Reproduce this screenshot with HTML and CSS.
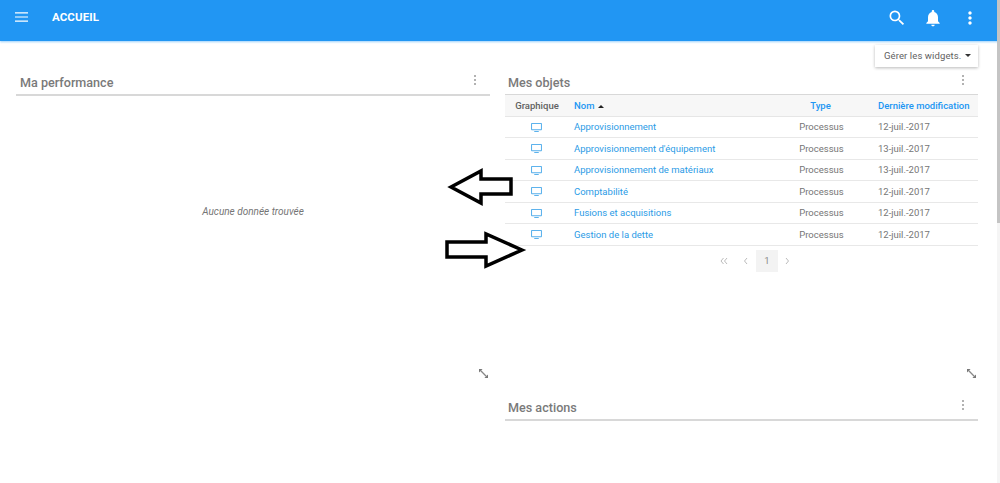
FILE: index.html
```html
<!DOCTYPE html>
<html lang="fr">
<head>
<meta charset="utf-8">
<title>Accueil</title>
<link rel="stylesheet" href="styles.css">
</head>
<body>
<div class="app">
  <header class="topbar">
    <svg class="menu-icon" viewBox="0 0 14 10"><path d="M0 .5h14M0 5h14M0 9.500h14"/></svg>
    <span class="topbar-title">ACCUEIL</span>
    <span class="topbar-actions">
      <svg class="top-icon" viewBox="0 0 24 24"><path d="M15.500 14h-.79l-.28-.27A6.470 6.470 0 0 0 16 9.500 6.500 6.500 0 1 0 9.500 16c1.610 0 3.090-.59 4.230-1.570l.27.28v.79l5 4.990L20.490 19l-4.990-5zm-6 0C7.010 14 5 11.990 5 9.500S7.010 5 9.500 5 14 7.010 14 9.500 11.990 14 9.500 14z"/></svg>
      <svg class="top-icon" viewBox="0 0 24 24"><path d="M12 22c1.100 0 2-.9 2-2h-4c0 1.100.9 2 2 2zm6-6v-5c0-3.070-1.630-5.640-4.500-6.320V4c0-.83-.67-1.500-1.500-1.500s-1.500.67-1.500 1.500v.68C7.640 5.360 6 7.920 6 11v5l-2 2v1h16v-1l-2-2z"/></svg>
      <svg class="top-icon" viewBox="0 0 24 24"><path d="M12 8c1.100 0 2-.9 2-2s-.9-2-2-2-2 .9-2 2 .9 2 2 2zm0 2c-1.100 0-2 .9-2 2s.9 2 2 2 2-.9 2-2-.9-2-2-2zm0 6c-1.100 0-2 .9-2 2s.9 2 2 2 2-.9 2-2-.9-2-2-2z"/></svg>
    </span>
  </header>

  <div class="toolbar">
    <button class="manage-btn">Gérer les widgets.<span class="caret"></span></button>
  </div>

  <main class="columns">
    <section class="col">
      <div class="widget widget-tall">
        <div class="widget-head">
          <h2>Ma performance</h2>
          <svg class="dots" viewBox="0 0 4 12"><circle cx="2" cy="2" r="1"/><circle cx="2" cy="6" r="1"/><circle cx="2" cy="10" r="1"/></svg>
        </div>
        <div class="empty">Aucune donnée trouvée</div>
        <div class="widget-foot">
          <svg class="expand" viewBox="0 0 10 10"><path class="expand-line" d="M2 2l6 6"/><path d="M0 0h4L0 4zM10 10H6l4-4z"/></svg>
        </div>
      </div>
    </section>

    <section class="col">
      <div class="widget widget-tall">
        <div class="widget-head widget-head-right">
          <h2>Mes objets</h2>
          <svg class="dots" viewBox="0 0 4 12"><circle cx="2" cy="2" r="1"/><circle cx="2" cy="6" r="1"/><circle cx="2" cy="10" r="1"/></svg>
        </div>
        <table class="objects">
          <thead>
            <tr>
              <th class="c-graph">Graphique</th>
              <th class="c-name link">Nom<span class="sort"></span></th>
              <th class="c-type link">Type</th>
              <th class="c-date link">Dernière modification</th>
            </tr>
          </thead>
          <tbody>
            <tr><td class="c-graph"><svg class="screen" viewBox="0 0 12 10"><path d="M.5.500h11v7H.5zM3.500 9.500h5"/></svg></td><td class="c-name link">Approvisionnement</td><td class="c-type">Processus</td><td class="c-date">12-juil.-2017</td></tr>
            <tr><td class="c-graph"><svg class="screen" viewBox="0 0 12 10"><path d="M.5.500h11v7H.5zM3.500 9.500h5"/></svg></td><td class="c-name link">Approvisionnement d'équipement</td><td class="c-type">Processus</td><td class="c-date">13-juil.-2017</td></tr>
            <tr><td class="c-graph"><svg class="screen" viewBox="0 0 12 10"><path d="M.5.500h11v7H.5zM3.500 9.500h5"/></svg></td><td class="c-name link">Approvisionnement de matériaux</td><td class="c-type">Processus</td><td class="c-date">13-juil.-2017</td></tr>
            <tr><td class="c-graph"><svg class="screen" viewBox="0 0 12 10"><path d="M.5.500h11v7H.5zM3.500 9.500h5"/></svg></td><td class="c-name link">Comptabilité</td><td class="c-type">Processus</td><td class="c-date">12-juil.-2017</td></tr>
            <tr><td class="c-graph"><svg class="screen" viewBox="0 0 12 10"><path d="M.5.500h11v7H.5zM3.500 9.500h5"/></svg></td><td class="c-name link">Fusions et acquisitions</td><td class="c-type">Processus</td><td class="c-date">12-juil.-2017</td></tr>
            <tr><td class="c-graph"><svg class="screen" viewBox="0 0 12 10"><path d="M.5.500h11v7H.5zM3.500 9.500h5"/></svg></td><td class="c-name link">Gestion de la dette</td><td class="c-type">Processus</td><td class="c-date">12-juil.-2017</td></tr>
          </tbody>
        </table>
        <nav class="pager">
          <svg class="pager-icon pager-first" viewBox="0 0 8 8"><path d="M3.500 1L1 4l2.500 3M7 1L4.500 4 7 7"/></svg>
          <svg class="pager-icon" viewBox="0 0 8 8"><path d="M5 1L2.500 4 5 7"/></svg>
          <span class="page-current">1</span>
          <svg class="pager-icon" viewBox="0 0 8 8"><path d="M3 1l2.500 3L3 7"/></svg>
        </nav>
        <div class="widget-foot">
          <svg class="expand" viewBox="0 0 10 10"><path class="expand-line" d="M2 2l6 6"/><path d="M0 0h4L0 4zM10 10H6l4-4z"/></svg>
        </div>
      </div>
      <div class="widget">
        <div class="widget-head widget-head-right">
          <h2>Mes actions</h2>
          <svg class="dots" viewBox="0 0 4 12"><circle cx="2" cy="2" r="1"/><circle cx="2" cy="6" r="1"/><circle cx="2" cy="10" r="1"/></svg>
        </div>
      </div>
    </section>
  </main>

  <svg class="arrow arrow-left" viewBox="0 0 70 40"><path d="M6 20L36 4v8h30v15H36v9z"/></svg>
  <svg class="arrow arrow-right" viewBox="0 0 86 42"><path d="M79 21L43 5v8H4v15h39v9z"/></svg>
  <div class="scrollbar"></div>
</div>
</body>
</html>
```
FILE: styles.css
```css
* { box-sizing: border-box; }
html, body { margin: 0; height: 100%; overflow: hidden; background: #fff; }
body { font-family: Roboto, "Liberation Sans", sans-serif; color: #757575; }

.app { position: relative; width: 1000px; height: 483px; overflow: hidden; }

.topbar {
  height: 41px; background: #2196f3; display: flex; align-items: center;
  padding: 0 20px 8px 15px; color: #fff;
  box-shadow: 0 1px 2px rgba(33,150,243,.45);
  position: relative;
}
.menu-icon { width: 13px; height: 10px; fill: none; stroke: #fff; stroke-width: 1.300; }
.topbar-title { margin-left: 24px; font-size: 11.500px; font-weight: 700; letter-spacing: .1px; }
.topbar-actions { margin-left: auto; display: flex; gap: 17px; margin-top: 2px; }
.top-icon { width: 20px; height: 20px; fill: #fff; display: block; }
.top-icon:first-child { margin-left: 1px; margin-right: -1px; }

.toolbar { display: flex; justify-content: flex-end; padding: 4px 22px 0 0; }
.manage-btn {
  width: 103px; height: 22px; border: 0; background: #fff; padding: 0 0 1px 9px;
  display: flex; align-items: center; font: 400 9.500px Roboto, sans-serif; color: #616161;
  box-shadow: 0 1px 3px rgba(0,0,0,.28); letter-spacing: .1px;
}
.caret { margin-left: 4px; border: 3.500px solid transparent; border-top: 3.500px solid #333; border-bottom: 0; }

.columns { display: grid; grid-template-columns: 474px 473px; column-gap: 15px; padding: 0 0 0 16px; margin-top: 3px; }
.col { min-width: 0; }
.widget-tall { height: 325px; display: flex; flex-direction: column; }

.widget-head {
  height: 26px; display: flex; align-items: flex-start; justify-content: space-between;
  padding: 5px 13px 0 4px; border-bottom: 2px solid #d8d8d8;
}
.widget-head-right { padding-left: 3px; }
h2 { margin: 0; font-size: 12.600px; line-height: 15px; font-weight: 500; color: #7a7a7a; }
.dots { width: 4px; height: 12px; fill: #999; margin-top: -1px; }

.empty { flex: 1; padding-top: 110px; text-align: center; font-size: 10px; font-style: italic; color: #757575; }

.widget-foot { height: 26px; flex: none; display: flex; justify-content: flex-end; padding-right: 2px; }
.expand { width: 9px; height: 9px; fill: #777; }
.expand-line { stroke: #888; stroke-width: 1.400; }

.objects { width: 100%; border-collapse: collapse; table-layout: fixed; font-size: 9.500px; margin-top: -1px; }
.objects th { height: 21px; background: #f7f7f7; font-weight: 500; color: #616161; border-bottom: 1px solid #e6e6e6; padding: 0; white-space: nowrap; }
.objects td { height: 21.500px; padding: 0; border-bottom: 1px solid #e8e8e8; white-space: nowrap; color: #757575; }
.objects .link { color: #2b9be6; }
.objects th.link { color: #2196f3; }
.c-graph { width: 64px; text-align: center; }
.objects .c-name { width: 210px; text-align: left; padding-left: 5px; }
.objects .c-type { width: 83px; text-align: center; }
.objects td.c-type { padding-left: 2px; }
.objects .c-date { width: 116px; text-align: left; padding-left: 16px; }
.screen { width: 11px; height: 9px; fill: none; stroke: #2b9be6; stroke-width: .9; display: block; margin: 0 0 -1px 26px; }
.sort { display: inline-block; margin-left: 4px; border: 3px solid transparent; border-bottom: 3px solid #222; border-top: 0; vertical-align: 1px; }

.pager { display: flex; align-items: center; justify-content: center; height: 22px; margin: 4px 0 auto 28px; }
.pager-icon { width: 8px; height: 8px; fill: none; stroke: #aaa; stroke-width: .8; }
.pager-first { margin-right: 14px; }
.page-current { width: 22px; height: 22px; margin: 0 5px 0 6px; background: #f3f3f3; color: #8a8a8a; font-size: 9.500px; display: flex; align-items: center; justify-content: center; }

.arrow { position: absolute; fill: #fff; stroke: #000; stroke-width: 3.500; }
.arrow-left { left: 445px; top: 167px; width: 70px; height: 40px; }
.arrow-right { left: 443px; top: 229px; width: 86px; height: 42px; }

.scrollbar { position: absolute; right: 0; top: 0; width: 3px; height: 483px; background: #f5f5f5; }
.scrollbar::after { content: ""; position: absolute; left: 0; top: 0; width: 3px; height: 223px; background: #c4c4c4; }
```
